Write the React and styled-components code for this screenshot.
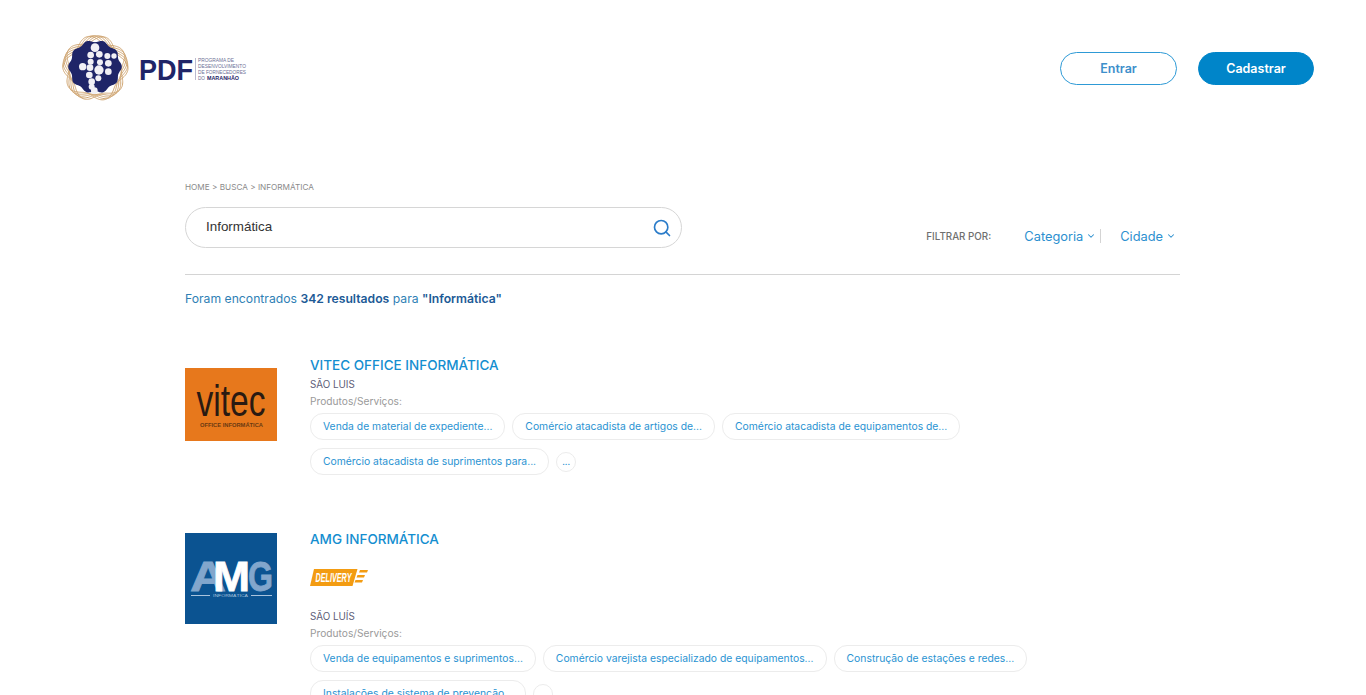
import React from 'react';
import styled, { createGlobalStyle } from 'styled-components';
import { Search, ChevronDown } from 'lucide-react';

const GlobalStyle = createGlobalStyle`
    html, body {
        margin: 0;
        padding: 0;
        background: #fff;
        overflow: hidden;
        font-family: "Inter", "Open Sans", sans-serif;
    }
    * { box-sizing: border-box; }
`;

// logo drawn in a 3x grid, scaled down below
const dots = [
    [135, 68, 13], [122, 90, 10], [148, 88, 10], [172, 93, 9], [192, 93, 8],
    [122, 110, 9], [150, 112, 9], [175, 115, 10], [98, 125, 11], [120, 128, 10],
    [147, 135, 14], [175, 140, 10], [118, 150, 10], [145, 160, 9], [125, 170, 10],
    [125, 185, 9], [133, 197, 10],
];

const polar = (cx, cy, radius) => {
    let d = '';
    for (let i = 0; i <= 180; i++) {
        const t = (i / 180) * Math.PI * 2;
        const r = radius(t);
        d += `${i === 0 ? 'M' : 'L'}${(cx + r * Math.cos(t)).toFixed(1)} ${(cy + r * Math.sin(t)).toFixed(1)} `;
    }
    return d + 'Z';
};

const disc = polar(135, 125, (t) => 77 + 3.5 * Math.cos(10 * t));
const rings = [0, 0.7, 1.4, 2.1, 2.8].map((p) => polar(136, 130, (t) => 88 + 10 * Math.cos(5 * t + p)));

function Logo() {
    return (
        <LogoSvg viewBox="0 0 186 70" width="186" height="70">
            <g transform="translate(-12 -8) scale(0.3333)">
                {rings.map((d, i) => (
                    <path key={i} d={d} fill="none" stroke="#cfa673" strokeWidth="3" />
                ))}
                <path d={disc} fill="#1f2568" />
                {dots.map(([x, y, r], i) => (
                    <circle key={i} cx={x} cy={y} r={r} fill="#f1f0f5" />
                ))}
            </g>
            <text x="77" y="47" fontFamily="Liberation Sans" fontWeight="700" fontSize="30" fill="#1f2568" textLength="54" lengthAdjust="spacingAndGlyphs">PDF</text>
            <rect x="133" y="25" width="1" height="22" fill="#b9bbd0" />
            <g fontFamily="Liberation Sans" fontSize="5.5" fill="#6b6f96">
                <text x="136" y="29" textLength="36" lengthAdjust="spacingAndGlyphs">PROGRAMA DE</text>
                <text x="136" y="35" textLength="48" lengthAdjust="spacingAndGlyphs">DESENVOLVIMENTO</text>
                <text x="136" y="41" textLength="48" lengthAdjust="spacingAndGlyphs">DE FORNECEDORES</text>
                <text x="136" y="47" textLength="7" lengthAdjust="spacingAndGlyphs">DO</text>
                <text x="145" y="47" textLength="32" lengthAdjust="spacingAndGlyphs" fontWeight="700" fill="#1f2568">MARANHÃO</text>
            </g>
        </LogoSvg>
    );
}

function VitecLogo() {
    return (
        <BrandSvg viewBox="0 0 92 73" width="92" height="73">
            <rect width="92" height="73" fill="#e7781c" />
            <text x="11.5" y="48" fontFamily="Liberation Sans" fontSize="44" fill="#2a1a12" textLength="69" lengthAdjust="spacingAndGlyphs">vitec</text>
            <text x="15" y="58.5" fontFamily="Liberation Sans" fontWeight="700" fontSize="6" fill="#6b3a12" textLength="63" lengthAdjust="spacingAndGlyphs">OFFICE INFORMÁTICA</text>
        </BrandSvg>
    );
}

function AmgLogo() {
    return (
        <BrandSvg viewBox="0 0 92 91" width="92" height="91">
            <rect width="92" height="91" fill="#0b5391" />
            <g fontFamily="Liberation Sans" fontWeight="700" fontSize="42" strokeWidth="0.8">
                <text x="5" y="58" fill="#82a6cc" stroke="#82a6cc" textLength="36" lengthAdjust="spacingAndGlyphs">A</text>
                <text x="63" y="58" fill="#82a6cc" stroke="#82a6cc" textLength="25" lengthAdjust="spacingAndGlyphs">G</text>
                <text x="28" y="58" fill="#fff" stroke="#fff" textLength="37" lengthAdjust="spacingAndGlyphs">M</text>
            </g>
            <rect x="6" y="62" width="19" height="1" fill="#a9c3dd" />
            <rect x="66" y="62" width="21" height="1" fill="#a9c3dd" />
            <text x="28" y="64" fontFamily="Liberation Sans" fontSize="4" fill="#a9c3dd" textLength="35" lengthAdjust="spacingAndGlyphs">INFORMÁTICA</text>
        </BrandSvg>
    );
}

function DeliveryBadge() {
    return (
        <BrandSvg viewBox="0 0 58 17" width="58" height="17">
            <path d="M4 0 H47.5 L42.5 17 H0 Z" fill="#f39c12" />
            <path d="M50 1 H58 L57 3.5 H49 Z M47.5 6 H55 L54 8.5 H46.5 Z M45.5 11 H53 L52 13.5 H44.5 Z" fill="#f39c12" />
            <text x="5.5" y="13" fontFamily="Liberation Sans" fontWeight="700" fontStyle="italic" fontSize="12.5" fill="#fff" textLength="36" lengthAdjust="spacingAndGlyphs">DELIVERY</text>
        </BrandSvg>
    );
}

const results = [
    {
        name: 'VITEC OFFICE INFORMÁTICA',
        city: 'SÃO LUIS',
        logo: <VitecLogo />,
        tags: [
            'Venda de material de expediente...',
            'Comércio atacadista de artigos de...',
            'Comércio atacadista de equipamentos de...',
            'Comércio atacadista de suprimentos para...',
        ],
    },
    {
        name: 'AMG INFORMÁTICA',
        city: 'SÃO LUÍS',
        logo: <AmgLogo />,
        delivery: true,
        tags: [
            'Venda de equipamentos e suprimentos...',
            'Comércio varejista especializado de equipamentos...',
            'Construção de estações e redes...',
            'Instalações de sistema de prevenção...',
        ],
    },
];

function App() {
    return (
        <Page>
            <GlobalStyle />
            <Header>
                <Logo />
                <HeaderActions>
                    <OutlineButton>Entrar</OutlineButton>
                    <SolidButton>Cadastrar</SolidButton>
                </HeaderActions>
            </Header>
            <Main>
                <Breadcrumb>HOME &gt; BUSCA &gt; INFORMÁTICA</Breadcrumb>
                <SearchRow>
                    <SearchBox>
                        <SearchText>Informática</SearchText>
                        <Search size={20} color="#2b7cc9" strokeWidth={2} />
                    </SearchBox>
                    <Filters>
                        <FilterLabel>FILTRAR POR:</FilterLabel>
                        <FilterLink $divider>Categoria <ChevronDown size={10} strokeWidth={2.5} /></FilterLink>
                        <FilterLink>Cidade <ChevronDown size={10} strokeWidth={2.5} /></FilterLink>
                    </Filters>
                </SearchRow>
                <Found>
                    Foram encontrados <strong>342 resultados</strong> para <strong>"Informática"</strong>
                </Found>
                {results.map((item) => (
                    <Result key={item.name}>
                        <LogoBox>{item.logo}</LogoBox>
                        <Info>
                            <Title>{item.name}</Title>
                            {item.delivery && <DeliveryRow><DeliveryBadge /></DeliveryRow>}
                            <City>{item.city}</City>
                            <Label>Produtos/Serviços:</Label>
                            <Tags>
                                {item.tags.map((tag) => <Tag key={tag}>{tag}</Tag>)}
                                <More>...</More>
                            </Tags>
                        </Info>
                    </Result>
                ))}
            </Main>
        </Page>
    );
}

const Page = styled.div`
    height: 695px;
    overflow: hidden;
    background: #fff;
`;

const Header = styled.header`
    display: flex;
    justify-content: space-between;
    align-items: flex-start;
    padding: 33px 52px 0 62px;
    height: 181px;
`;

const LogoSvg = styled.svg`
    display: block;
`;

const BrandSvg = styled.svg`
    display: block;
`;

const HeaderActions = styled.div`
    display: flex;
    gap: 21px;
    margin-top: 19px;
`;

const OutlineButton = styled.button`
    width: 117px;
    height: 33px;
    border-radius: 17px;
    border: 1px solid #2e9ad6;
    background: #fff;
    color: #3d8fcb;
    font: 600 12.5px "Inter", sans-serif;
`;

const SolidButton = styled(OutlineButton)`
    width: 116px;
    background: #0085c9;
    border-color: #0085c9;
    color: #fff;
`;

const Main = styled.main`
    width: 995px;
    margin-left: 185px;
`;

const Breadcrumb = styled.div`
    font-size: 8.2px;
    line-height: 12px;
    color: #8a8a8a;
`;

const SearchRow = styled.div`
    display: flex;
    justify-content: space-between;
    align-items: flex-start;
    margin-top: 14px;
    padding-bottom: 26px;
    border-bottom: 1px solid #d4d4d4;
`;

const SearchBox = styled.div`
    width: 497px;
    height: 41px;
    border: 1px solid #d6d6d6;
    border-radius: 21px;
    display: flex;
    align-items: center;
    justify-content: space-between;
    padding: 0 9px 0 20px;
`;

const SearchText = styled.span`
    font: 13.4px "Liberation Sans", sans-serif;
    color: #333;
    margin-top: -2px;
`;

const Filters = styled.div`
    display: flex;
    align-items: center;
    margin-top: 21px;
    height: 16px;
`;

const FilterLabel = styled.span`
    font-size: 9.8px;
    font-weight: 500;
    color: #6f6f6f;
    width: 98px;
`;

const FilterLink = styled.span`
    display: flex;
    align-items: center;
    gap: 3px;
    font-size: 12.8px;
    color: #2b8fcf;
    height: 14px;
    padding-right: 4px;
    margin-right: ${(p) => (p.$divider ? '19px' : '0')};
    border-right: ${(p) => (p.$divider ? '1px solid #d4d4d4' : 'none')};
`;

const Found = styled.div`
    margin-top: 16px;
    font-size: 12.2px;
    line-height: 16px;
    color: #2f7fb5;

    strong {
        font-weight: 600;
        color: #1c5a96;
    }
`;

const Result = styled.section`
    display: flex;
    margin-top: 53px;

    & + & {
        margin-top: 58px;
    }
`;

const LogoBox = styled.div`
    width: 92px;
    margin-right: 33px;
    padding-top: 8px;

    section + section & {
        padding-top: 0;
    }
`;

const Info = styled.div`
    flex: 1;
    margin-top: -4px;

    section + section & {
        margin-top: -3px;
    }
`;

const Title = styled.h2`
    margin: 0;
    font-size: 13.5px;
    font-weight: 500;
    line-height: 18px;
    color: #148ed0;
`;

const DeliveryRow = styled.div`
    margin: 21px 0 24px;
`;

const City = styled.div`
    margin-top: 4px;
    font-size: 9.8px;
    line-height: 14px;
    color: #5d5d78;
`;

const Label = styled.div`
    margin-top: 2px;
    font-size: 10.2px;
    line-height: 14px;
    color: #9a9a9a;
`;

const Tags = styled.div`
    display: flex;
    flex-wrap: wrap;
    align-items: center;
    gap: 8px 7px;
    margin-top: 5px;
`;

const Tag = styled.span`
    display: inline-flex;
    align-items: center;
    height: 27px;
    padding: 0 12px 1px;
    border: 1px solid #ececec;
    border-radius: 13px;
    font-size: 10.35px;
    color: #2a93d2;
    white-space: nowrap;
`;

const More = styled.span`
    display: inline-flex;
    align-items: center;
    justify-content: center;
    width: 20px;
    height: 20px;
    border: 1px solid #ececec;
    border-radius: 50%;
    font-size: 9px;
    color: #2a93d2;
`;

export default App;
